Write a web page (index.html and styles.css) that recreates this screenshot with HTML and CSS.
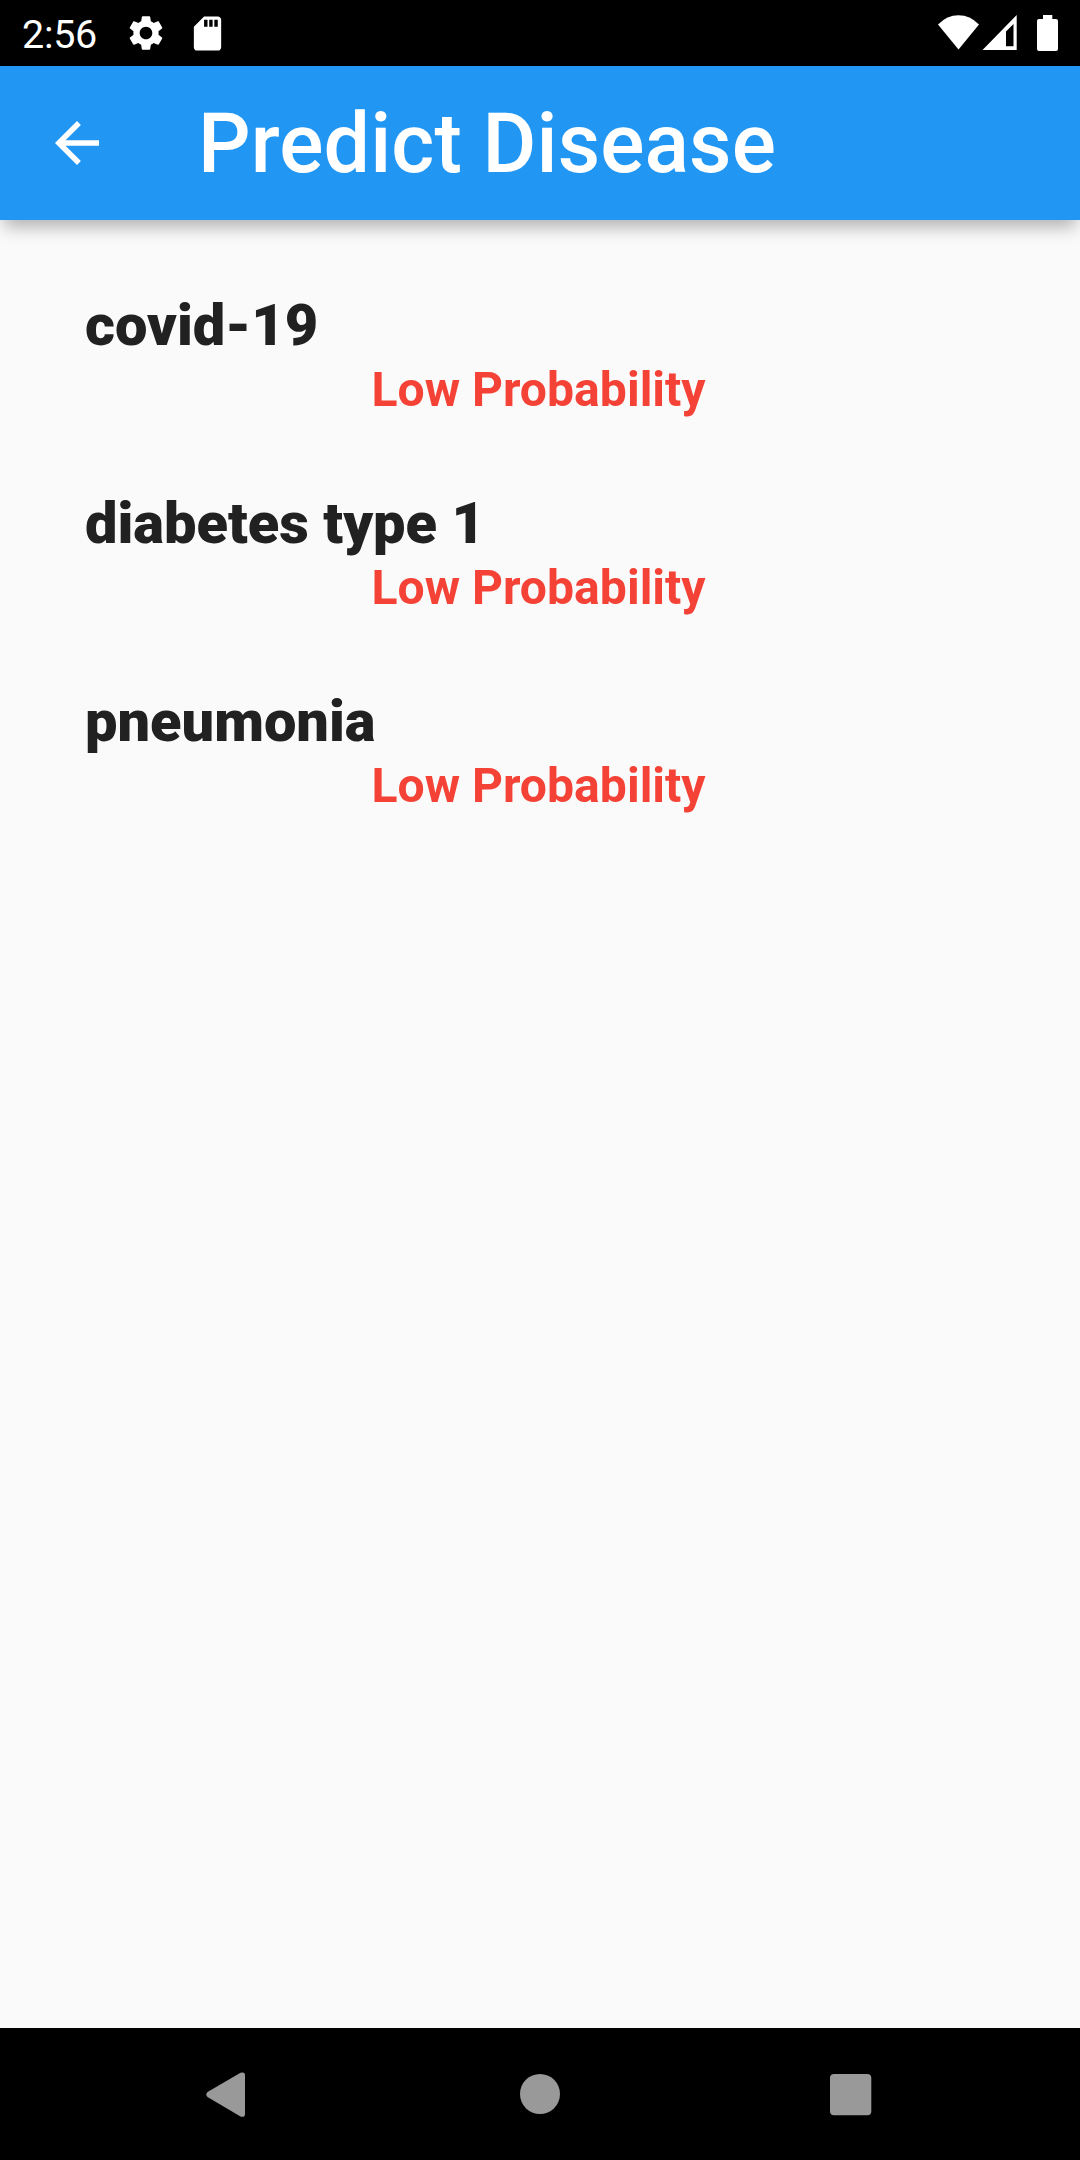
FILE: index.html
```html
<!DOCTYPE html>
<html lang="en">
<head>
<meta charset="utf-8">
<title>Predict Disease</title>
<link rel="stylesheet" href="styles.css">
</head>
<body>
<div class="screen">
  <div class="status">
    <span class="clock">2:56</span>
    <svg class="gear" viewBox="0 0 24 24"><path fill="#fff" d="M19.14 12.94c.04-.3.06-.61.06-.94 0-.32-.02-.64-.07-.94l2.03-1.58c.18-.14.23-.41.12-.61l-1.92-3.32c-.12-.22-.37-.29-.59-.22l-2.39.96c-.5-.38-1.03-.7-1.62-.94l-.36-2.54c-.04-.24-.24-.41-.48-.41h-3.84c-.24 0-.43.17-.47.41l-.36 2.54c-.59.24-1.13.57-1.62.94l-2.39-.96c-.22-.08-.47 0-.59.22L2.74 8.87c-.12.21-.08.47.12.61l2.03 1.58c-.05.3-.09.63-.09.94s.02.64.07.94l-2.03 1.58c-.18.14-.23.41-.12.61l1.92 3.32c.12.22.37.29.59.22l2.39-.96c.5.38 1.03.7 1.62.94l.36 2.54c.05.24.24.41.48.41h3.84c.24 0 .44-.17.47-.41l.36-2.54c.59-.24 1.13-.56 1.62-.94l2.39.96c.22.08.47 0 .59-.22l1.92-3.32c.12-.22.07-.47-.12-.61l-2.01-1.58zM12 15.6c-1.98 0-3.6-1.62-3.6-3.6s1.62-3.6 3.6-3.6 3.6 1.62 3.6 3.6-1.62 3.6-3.6 3.6z"/></svg>
    <svg class="card" viewBox="0 0 24 24"><path fill="#fff" d="M18 2h-8L4.02 8 4 20c0 1.100.9 2 2 2h12c1.100 0 2-.9 2-2V4c0-1.100-.9-2-2-2zm-6 6h-2V4h2v4zm3 0h-2V4h2v4zm3 0h-2V4h2v4z"/></svg>
    <svg class="signals" viewBox="0 0 130 66"><path fill="#fff" d="M8 24.500Q17 15.300 28.500 15.300T49 24.500L28.500 49.500Z"/><path fill="#fff" fill-rule="evenodd" d="M52.500 50 86.700 15V50ZM76 31.500V46.200H83.500V24Z"/><path fill="#fff" d="M109 19h4v-4h9.300v4h3.700q2 0 2 2v28q0 2-2 2h-17q-2 0-2-2V21q0-2 2-2z"/></svg>
  </div>
  <header class="appbar">
    <svg class="back" viewBox="0 0 24 24"><path fill="#fff" d="M20 11H7.830l5.590-5.590L12 4l-8 8 8 8 1.410-1.410L7.830 13H20z"/></svg>
    <h1 class="title">Predict Disease</h1>
  </header>
  <main class="list">
    <section class="item"><h2 class="name">covid-19</h2><p class="result">Low Probability</p></section>
    <section class="item"><h2 class="name">diabetes type 1</h2><p class="result">Low Probability</p></section>
    <section class="item"><h2 class="name">pneumonia</h2><p class="result">Low Probability</p></section>
  </main>
  <nav class="nav">
    <svg class="navicons" viewBox="0 0 1080 132"><g fill="#999"><path d="M207.500 64 240.500 44.800Q245 43.500 245 47V86Q245 89.800 240.500 88.500L207.500 69Q205 66.500 207.500 64Z"/><circle cx="540" cy="66" r="20"/><rect x="830" y="46" width="41.300" height="41.300" rx="4"/></g></svg>
  </nav>
</div>
</body>
</html>
```
FILE: styles.css
```css
body { margin: 0; }
.screen { display: flex; flex-direction: column; width: 1080px; height: 2160px; background: #fafafa; font-family: Roboto, sans-serif; overflow: hidden; }
.status { display: flex; align-items: center; height: 66px; background: #000; color: #fff; }
.clock { width: 100px; margin-left: 22px; font-size: 39.500px; letter-spacing: -.3px; line-height: 66px; padding-top: 2px; box-sizing: border-box; height: 66px; }
.gear { width: 42px; height: 42px; margin-left: 3px; }
.card { width: 41px; height: 41px; margin-left: 20px; }
.signals { width: 130px; height: 66px; margin-left: auto; margin-right: 20px; }
.appbar { display: flex; align-items: center; height: 154px; background: #2196f3; box-shadow: 0 11px 16px -4px rgba(0, 0, 0, .29); }
.back { width: 66px; height: 66px; margin-left: 44px; }
.title { margin: 0 0 0 88px; color: #fff; font-size: 82.500px; font-weight: 500; letter-spacing: .1px; line-height: 97px; }
.list { flex: 1; padding-top: 71px; }
.item { height: 198px; }
.name { margin: 0 0 0 85px; font-size: 57.750px; font-weight: 900; line-height: 68px; color: #212121; }
.result { margin: 0 0 0 371.500px; padding-top: 2px; font-size: 48.125px; font-weight: 700; line-height: 58px; color: #f44336; }
.nav { height: 132px; background: #000; }
.navicons { display: block; width: 1080px; height: 132px; }
```
